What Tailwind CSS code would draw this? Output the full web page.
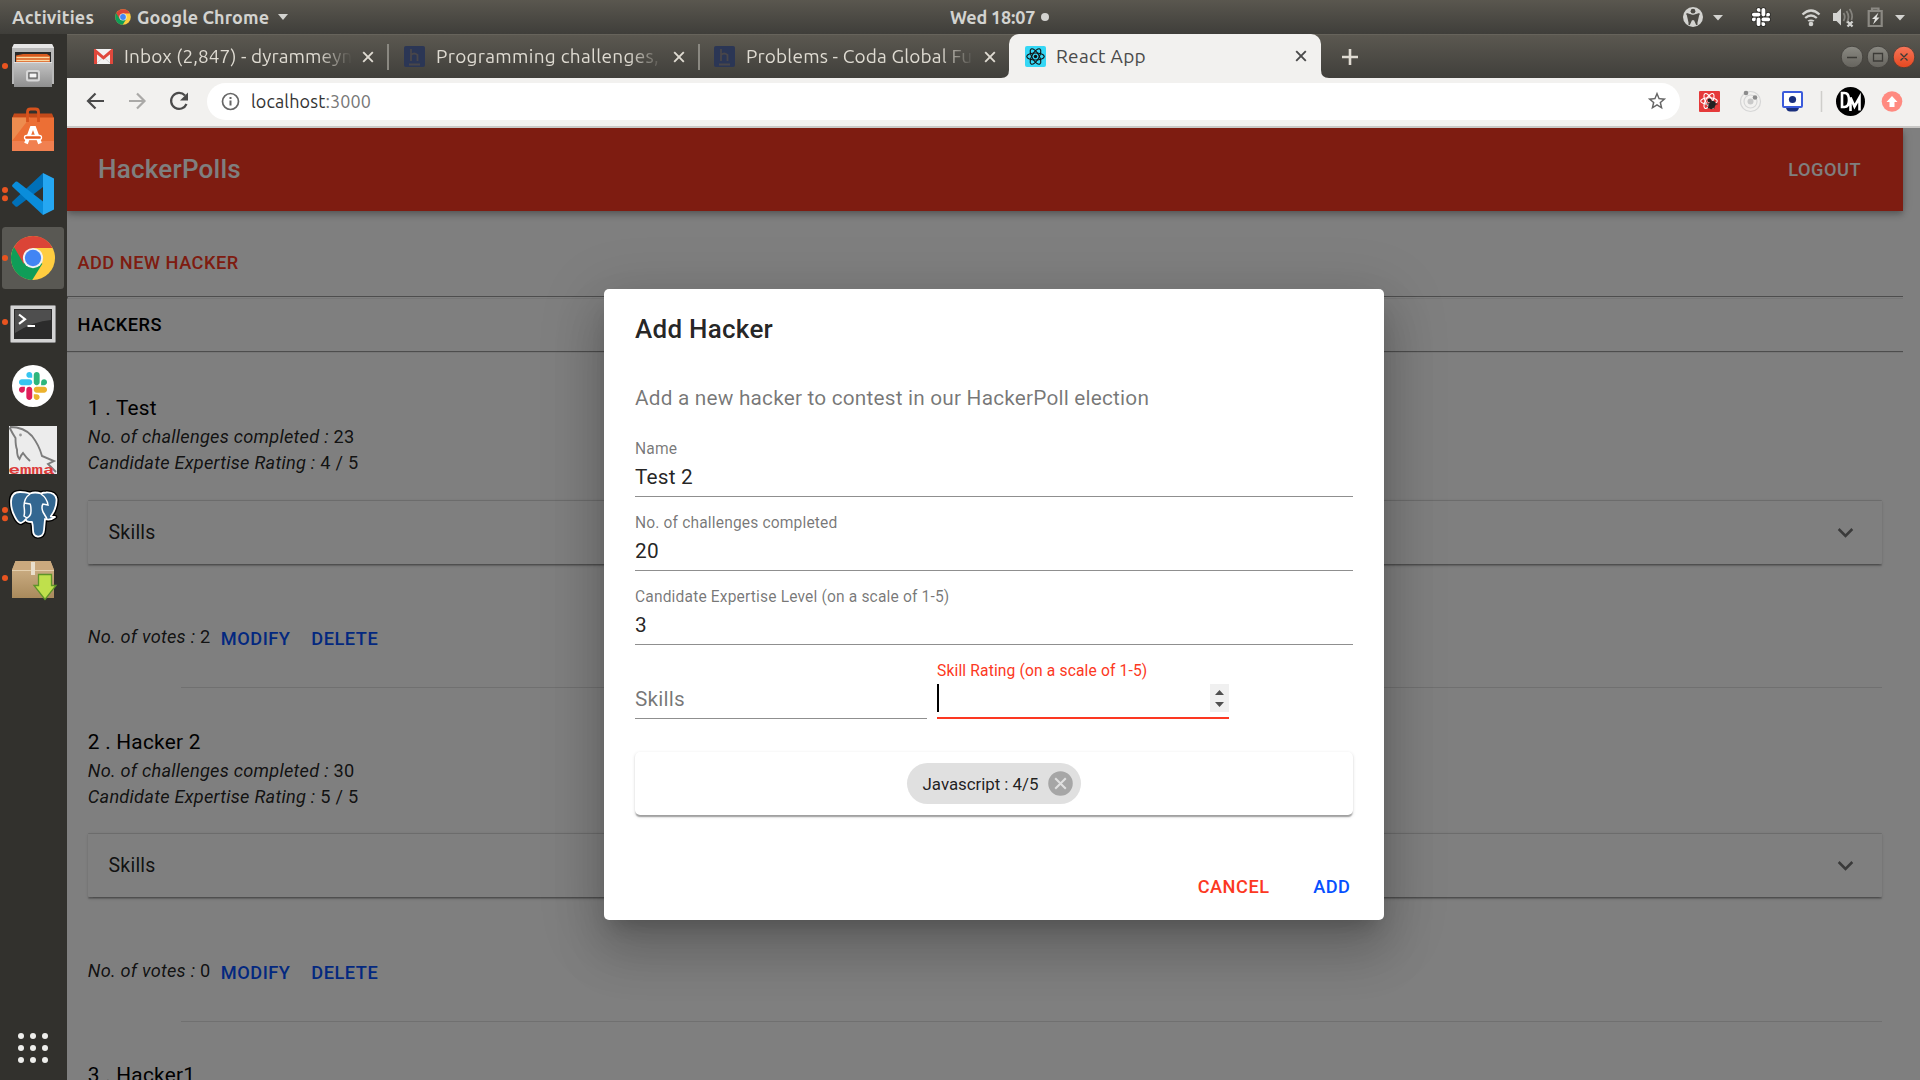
<!DOCTYPE html>
<html lang="en">
<head>
<meta charset="utf-8">
<title>React App</title>
<script src="https://cdn.jsdelivr.net/npm/@tailwindcss/browser@4"></script>
</head>
<body class="w-[1920px] h-[1080px] overflow-hidden flex flex-col bg-[#32312d] font-[Roboto,sans-serif]">
<svg class="hidden">
  <symbol id="chrome" viewBox="0 0 48 48">
    <circle cx="24" cy="24" r="23.5" fill="#ffcd40"/>
    <path d="M24 24 3.7 12.2A23.5 23.5 0 0 0 23.2 47.5L34 30z" fill="#0f9d58"/>
    <path d="M3.7 12.2A23.500 23.500 0 0 1 44.800 13.200H24L14 30z" fill="#db4437"/>
    <circle cx="24" cy="24" r="10.800" fill="#f1f1f1"/><circle cx="24" cy="24" r="8.700" fill="#4285f4"/>
  </symbol>
  <symbol id="slack" viewBox="-6 -6 134.800 134.800">
    <g stroke="var(--o,none)" stroke-width="10" paint-order="stroke">
    <path d="M25.800 77.600c0 7.100-5.800 12.900-12.900 12.900S0 84.700 0 77.600s5.800-12.900 12.900-12.900h12.900v12.900zm6.500 0c0-7.100 5.800-12.900 12.900-12.900s12.900 5.800 12.900 12.900v32.300c0 7.100-5.800 12.900-12.900 12.900s-12.900-5.800-12.900-12.900V77.600z" fill="var(--a,#e01e5a)"/>
    <path d="M45.200 25.800c-7.100 0-12.900-5.800-12.900-12.900S38.100 0 45.200 0s12.900 5.800 12.900 12.900v12.900H45.200zm0 6.500c7.100 0 12.900 5.800 12.900 12.900s-5.800 12.900-12.900 12.900H12.900C5.800 58.100 0 52.300 0 45.200s5.800-12.900 12.900-12.900h32.300z" fill="var(--a,#36c5f0)"/>
    <path d="M97 45.200c0-7.100 5.800-12.900 12.900-12.900s12.900 5.800 12.900 12.900-5.800 12.900-12.900 12.900H97V45.200zm-6.500 0c0 7.100-5.800 12.900-12.900 12.900s-12.900-5.800-12.900-12.900V12.900C64.700 5.800 70.500 0 77.600 0s12.900 5.800 12.900 12.900v32.300z" fill="var(--a,#2eb67d)"/>
    <path d="M77.600 97c7.100 0 12.900 5.800 12.900 12.900s-5.800 12.900-12.900 12.900-12.900-5.800-12.900-12.900V97h12.900zm0-6.500c-7.100 0-12.900-5.800-12.900-12.900s5.800-12.900 12.900-12.900h32.300c7.100 0 12.900 5.800 12.900 12.900s-5.800 12.900-12.900 12.900H77.600z" fill="var(--a,#ecb22e)"/>
    </g>
  </symbol>
  <symbol id="x" viewBox="0 0 12 12"><path d="M1.200 1.200l9.600 9.600M10.800 1.200l-9.600 9.600" stroke="currentColor" stroke-width="1.900"/></symbol>
  <symbol id="atom" viewBox="-12 -12 24 24"><g fill="none" stroke="currentColor" stroke-width="1.300"><ellipse rx="10" ry="4"/><ellipse rx="10" ry="4" transform="rotate(60)"/><ellipse rx="10" ry="4" transform="rotate(120)"/></g><circle r="2" fill="currentColor"/></symbol>
</svg>

<!-- GNOME top bar -->
<header class="h-[34px] shrink-0 grid grid-cols-[1fr_auto_1fr] items-center bg-linear-to-b from-[#5a574f] to-[#3f3e3a] text-[#d3d3d0] font-['Ubuntu','Noto_Sans',sans-serif] font-semibold text-[18px]">
  <div class="flex items-center h-full pl-3">
    <span class="w-[103px] tracking-[0.200px]">Activities</span>
    <svg class="size-4 mr-[6px]"><use href="#chrome"/></svg>
    <span class="w-[141px] whitespace-nowrap tracking-[0.100px]">Google Chrome</span>
    <svg class="w-[10px] h-[6px]" viewBox="0 0 10 6"><path d="M0 0h10L5 6z" fill="#d3d3d0"/></svg>
  </div>
  <div class="flex items-center ml-20 w-[100px]"><span class="w-[91px] whitespace-nowrap tracking-[-0.200px]">Wed 18:07</span><i class="size-2 rounded-full bg-[#d3d3d0] shrink-0"></i></div>
  <div class="flex justify-end">
    <svg class="w-[250px] h-[34px]" viewBox="1670 0 250 34">
      <circle cx="1693" cy="17" r="10" fill="#d3d3d0"/><circle cx="1693" cy="11.200" r="2.400" fill="#4b4944"/><path d="M1686.500 13.800l5 1.500v4l-2.500 5.500M1699.500 13.800l-5 1.500v4l2.500 5.500M1691.500 15.500h3v4h-3z" fill="#4b4944" stroke="#4b4944" stroke-width="1.600"/>
      <path d="M1713 15h10l-5 5.500zM1895 15h10l-5 5.500z" fill="#d3d3d0"/>
      <g style="--a:#fff;--o:#2b2a27"><use href="#slack" x="1751" y="7" width="20" height="20"/></g>
      <g fill="none" stroke="#d3d3d0" stroke-width="2.300"><path d="M1802.500 14.500q8.500-8 17 0M1805.200 18q5.800-5 11.600 0"/></g><path d="M1807.500 20.500q3.500-2 7 0l-1 1h-5z" fill="#d3d3d0"/><circle cx="1811" cy="24" r="2.300" fill="#d3d3d0"/>
      <path d="M1833 13h3.500l4.500-4.500v17l-4.500-4.500h-3.500z" fill="#d3d3d0"/><g fill="none" stroke="#85837d" stroke-width="1.800"><path d="M1843.500 13q2.500 4 0 8M1846.500 11q4 6 0 12M1849.500 9q4 5.500 2 11"/></g><path d="M1847.500 21.500l5 5m0-5l-5 5" stroke="#d3d3d0" stroke-width="2.300"/>
      <path d="M1868.700 11h13v15h-13zM1872 10.500v-2h6.500v2" fill="none" stroke="#8b8983" stroke-width="2.200"/><path d="M1878.500 12.500l-6.500 6.500h3l-2 5.500 6.500-7h-3z" fill="#e3e3e0"/>
    </svg>
  </div>
</header>

<div class="flex h-[1046px]">
  <!-- Dock -->
  <nav class="w-[67px] shrink-0 flex flex-col bg-[#32312d]">
    <svg class="w-[67px] h-16" viewBox="0 0 67 64">
      <defs><linearGradient id="gm" x2="0" y2="1"><stop stop-color="#c4c4c4"/><stop offset="1" stop-color="#8f8f8f"/></linearGradient></defs>
      <circle cx="5" cy="32" r="3" fill="#e95420"/>
      <path d="M14 10h38l2 4v36H12V14z" fill="#b9b9b9"/><path d="M14 10h38l2 4H12z" fill="#e6e6e6"/><rect x="15" y="18" width="36" height="11" fill="#282828"/><path d="M16 28v-6.500l7-1.500h24l3 2v6z" fill="#d85a1e"/><path d="M16.500 23.500h33M16.500 26.500h33" stroke="#fbd8a0" stroke-width="1.300"/>
      <rect x="14" y="28" width="38" height="25" fill="url(#gm)"/><path d="M14 28.500h38" stroke="#e0e0e0"/><rect x="27" y="37" width="12" height="9.500" rx="1.500" fill="none" stroke="#d8d8d8" stroke-width="2"/><rect x="29" y="39" width="8" height="5" fill="#f5f5f5" stroke="#555"/>
    </svg>
    <svg class="w-[67px] h-16" viewBox="0 0 67 64">
      <path d="M14 15.500h38l2 5H12z" fill="#c34a1a"/><path d="M12 19.500h42V53H12z" fill="#ec6f35"/><path d="M12 43h42v10H12z" fill="#f18050"/><path d="M12 19.500h18L12 43z" fill="#efa060" opacity=".6"/>
      <path d="M27.500 24V14q0-3 3-3h5q3 0 3 3v10" fill="none" stroke="#d6521d" stroke-width="2.800"/>
      <path d="M26 45.500L31.700 30h2.600L40 45.500" fill="none" stroke="#fff" stroke-width="3.800"/><rect x="24.500" y="37.500" width="17" height="4" rx="2" fill="#e85a1f" stroke="#fff" stroke-width="1.300"/>
    </svg>
    <svg class="w-[67px] h-16" viewBox="0 0 67 64">
      <circle cx="5" cy="28" r="3" fill="#e95420"/><circle cx="5" cy="36.300" r="3" fill="#e95420"/>
      <path d="M43 11L12.500 39.500q-1 1 0 2l3 3q1 .7 2 0L43 25z" fill="#0070b8"/><path d="M43 53L12.500 24.800q-1-1 0-2l3-3q1-.7 2 0L43 39.500z" fill="#0a8ddb"/><path d="M43 11l11 5.500v31L43 53z" fill="#25a7f2"/>
    </svg>
    <svg class="w-[67px] h-16" viewBox="0 0 67 64">
      <rect x="2" y="1" width="62" height="62" rx="3.500" fill="#595853"/><circle cx="5" cy="32" r="3" fill="#e95420"/><use href="#chrome" x="10.500" y="9.500" width="45" height="45"/>
    </svg>
    <svg class="w-[67px] h-16" viewBox="0 0 67 64">
      <circle cx="5" cy="32" r="3" fill="#e95420"/>
      <rect x="10.500" y="15.500" width="45" height="37" rx="1" fill="#d4d4d4" stroke="#8c8c8c"/><rect x="14" y="19" width="38" height="30" fill="#2b2b2b"/><path d="M15 20h36v10Q34 31 15 43z" fill="#4e4e4e"/><path d="M19 24.500l6 4.700-6 4.700M27.500 36h7.500" stroke="#fff" stroke-width="2.200" fill="none"/>
    </svg>
    <svg class="w-[67px] h-16" viewBox="0 0 67 64"><circle cx="33" cy="32" r="21" fill="#fff"/><use href="#slack" x="17.600" y="16.600" width="30.800" height="30.800"/></svg>
    <svg class="w-[67px] h-16" viewBox="0 0 67 64">
      <rect x="9" y="8" width="48" height="48" fill="#ececec"/>
      <path d="M9.500 9.500q3 6 6 10.500 0 8 1.500 11.500 0 7 2.500 9.500 1.500-4 3.500-6 3.500 5 7 8M10 9q14 0 22 9 7 9 10 20l12 5-6 3 8 8" fill="none" stroke="#7c7c7c" stroke-width="1.900"/><circle cx="20.500" cy="17" r="1.400" fill="#999"/>
      <text x="8.500" y="55.500" textLength="46" lengthAdjust="spacingAndGlyphs" class="font-['Liberation_Mono',monospace] font-bold text-[13px]" fill="#dc3a3a">emma</text>
    </svg>
    <svg class="w-[67px] h-16" viewBox="0 0 67 64">
      <circle cx="5" cy="28" r="3" fill="#e95420"/><circle cx="5" cy="36.300" r="3" fill="#e95420"/>
      <g stroke-linejoin="round" fill="#336791"><path d="M20 10q-9 0-9 10 0 8 4 15 3 6 6 6 3-1 5-4-1 3 6 3 1 3 1 8 0 6 4.500 6.500 6 .5 6.500-6.500l1-11q5 2 10-2-5 0-4-1 6-8 5.500-17Q55 10 46 10.500q-3 0-5 1-6-2-11 0-5-1.500-10-1.500z" stroke="#000" stroke-width="4.500"/><path d="M20 10q-9 0-9 10 0 8 4 15 3 6 6 6 3-1 5-4-1 3 6 3 1 3 1 8 0 6 4.500 6.500 6 .5 6.500-6.500l1-11q5 2 10-2-5 0-4-1 6-8 5.500-17Q55 10 46 10.500q-3 0-5 1-6-2-11 0-5-1.500-10-1.500z" stroke="#fff" stroke-width="1.800"/></g>
      <path d="M30 12q-6 4-6 12 1 7 0 10l3 2q4-2 4-7 0-6-1-7l-6-1M41 12q6 4 7 11l-5-1q-2 3 0 8 3 5 4 7" fill="none" stroke="#fff" stroke-width="1.500"/>
    </svg>
    <svg class="w-[67px] h-16" viewBox="0 0 67 64">
      <defs><linearGradient id="bx" x2="0" y2="1"><stop stop-color="#d3b58c"/><stop offset="1" stop-color="#a98a5c"/></linearGradient></defs>
      <circle cx="5" cy="32" r="3" fill="#e95420"/>
      <path d="M15.500 15h35L54 24v28H12V24z" fill="url(#bx)"/><path d="M15.500 15h35L54 24H12z" fill="#cba97e"/><path d="M12 24.500h42" stroke="#e4cfae"/><path d="M31 16h4v13h-4z" fill="#eadfcd"/>
      <path d="M38.500 28.500h13v11H56l-11 14-11-14h4.500z" fill="#bfe04c" stroke="#5d9429" stroke-width="1.300"/>
    </svg>
    <svg class="w-[67px] h-[60px] mt-auto mb-[2px]" viewBox="0 0 67 60" fill="#eeeeec">
      <circle cx="21" cy="18" r="3"/><circle cx="33" cy="18" r="3"/><circle cx="45" cy="18" r="3"/><circle cx="21" cy="30" r="3"/><circle cx="33" cy="30" r="3"/><circle cx="45" cy="30" r="3"/><circle cx="21" cy="42" r="3"/><circle cx="33" cy="42" r="3"/><circle cx="45" cy="42" r="3"/>
    </svg>
  </nav>

  <div class="flex flex-col w-[1853px]">
    <!-- Browser tabs -->
    <div class="h-11 shrink-0 flex items-center bg-linear-to-b from-[#5b5850] to-[#403f3b] border-t border-[#66635b] font-['Ubuntu','Noto_Sans',sans-serif] text-[19px] text-[#dfdbd2]">
      <div class="w-[322px] h-full flex items-center pl-[27px]">
        <svg class="w-[19px] h-[15px] mr-[11px]" viewBox="0 0 19 15"><rect width="19" height="15" rx="1.500" fill="#f2f2f2"/><path d="M3 14l6.500-6L16 14" fill="none" stroke="#d5d5d5"/><path d="M1.500 15V2l8 6.800L17.500 2v13" fill="none" stroke="#e0483c" stroke-width="3"/></svg>
        <span class="w-[228px] overflow-hidden whitespace-nowrap tracking-[0.100px] mask-r-from-85% mask-r-to-100%">Inbox (2,847) - dyrammeyn</span>
        <svg class="size-3 ml-[10px] mr-[13px]"><use href="#x"/></svg>
        <i class="w-[2px] h-[26px] bg-[#8a8881]"></i>
      </div>
      <div class="w-[311px] h-full flex items-center pl-[15px]">
        <svg class="size-[21px] mr-[11px]" viewBox="0 0 21 21"><rect width="21" height="21" rx="2" fill="#2b3655"/><path d="M7 3v12M7 9q3-3 6.500 0v6M5 18.500h11" fill="none" stroke="#49464a" stroke-width="1.800"/></svg>
        <span class="w-[227px] overflow-hidden whitespace-nowrap tracking-[0.300px] mask-r-from-85% mask-r-to-100%">Programming challenges,</span>
        <svg class="size-3 ml-[10px] mr-[13px]"><use href="#x"/></svg>
        <i class="w-[2px] h-[26px] bg-[#8a8881]"></i>
      </div>
      <div class="w-[309px] h-full flex items-center pl-[14px]">
        <svg class="size-[21px] mr-[11px]" viewBox="0 0 21 21"><rect width="21" height="21" rx="2" fill="#2b3655"/><path d="M7 3v12M7 9q3-3 6.500 0v6M5 18.500h11" fill="none" stroke="#49464a" stroke-width="1.800"/></svg>
        <span class="w-[228px] overflow-hidden whitespace-nowrap tracking-[0.150px] mask-r-from-85% mask-r-to-100%">Problems - Coda Global Fu</span>
        <svg class="size-3 ml-[10px]"><use href="#x"/></svg>
      </div>
      <div class="relative w-[312px] h-11 -mt-px flex items-center pl-4 rounded-t-[10px] bg-[#f2f1ef] text-[#4a4a4a]">
        <svg class="absolute -left-2 bottom-0 size-2" viewBox="0 0 8 8"><path d="M8 0v8H0q8 0 8-8" fill="#f2f1ef"/></svg>
        <svg class="absolute -right-2 bottom-0 size-2" viewBox="0 0 8 8"><path d="M0 0v8h8q-8 0-8-8" fill="#f2f1ef"/></svg>
        <svg class="size-[21px] mr-[10px] rounded-[2px] bg-[#35d7f5] text-[#111]"><use href="#atom"/></svg>
        <span class="w-[239px] tracking-[0.300px]">React App</span>
        <svg class="size-3"><use href="#x"/></svg>
      </div>
      <svg class="size-4 ml-[21px]" viewBox="0 0 16 16"><path d="M8 0v16M0 8h16" stroke="#dfdbd2" stroke-width="2.600"/></svg>
      <svg class="w-[80px] h-6 ml-auto" viewBox="0 0 80 24">
        <defs><linearGradient id="wb" x2="0" y2="1"><stop stop-color="#8b8a83"/><stop offset="1" stop-color="#65635d"/></linearGradient><linearGradient id="wc" x2="0" y2="1"><stop stop-color="#f8765a"/><stop offset="1" stop-color="#e6471e"/></linearGradient></defs>
        <g stroke="#3d3b37" stroke-width=".8"><circle cx="12" cy="12" r="10.800" fill="url(#wb)"/><circle cx="38" cy="12" r="10.800" fill="url(#wb)"/><circle cx="64" cy="12" r="10.800" fill="url(#wc)"/></g>
        <g fill="none" stroke="#3c3b37" stroke-width="1.300"><path d="M7 12.500h10M33.500 8.500h9v7.500h-9zM60.500 8.500l7 7m0-7l-7 7"/></g>
      </svg>
    </div>
    <!-- Toolbar -->
    <div class="h-[50px] shrink-0 flex items-center bg-[#f2f1ef] border-b-2 border-[#c9c8c6] pb-0.5 font-['Ubuntu','Noto_Sans',sans-serif] text-[18px]">
      <svg class="w-[140px] h-8" viewBox="67 85 140 32" fill="none" stroke-width="2.200">
        <path d="M104 101H88.500M95.500 93.500L88 101l7.500 7.500" stroke="#4a4a4a"/><path d="M129 101h15.500M137 93.500l7.500 7.500-7.500 7.500" stroke="#aaa9a7"/><path d="M186.500 104a8 8 0 1 1-1.500-8.500" stroke="#4a4a4a"/><path d="M188 92.500v8h-8z" fill="#4a4a4a"/>
      </svg>
      <div class="flex items-center w-[1473px] h-[37px] rounded-full bg-white pl-[14px] pr-[12.500px]">
        <svg class="size-[19px] mr-[11px]" viewBox="0 0 19 19"><circle cx="9.500" cy="9.500" r="8" fill="none" stroke="#666" stroke-width="1.700"/><path d="M9.500 8.500v5M9.500 5v2" stroke="#666" stroke-width="2"/></svg>
        <span class="text-[#333] tracking-[0.130px]">localhost<span class="text-[#777]">:3000</span></span>
        <svg class="size-[22px] ml-auto" viewBox="0 0 24 24"><path d="M22 9.240l-7.190-.62L12 2 9.190 8.630 2 9.240l5.460 4.730L5.820 21 12 17.270 18.180 21l-1.630-7.030L22 9.240zM12 15.400l-3.760 2.270 1-4.280-3.320-2.880 4.380-.38L12 6.100l1.710 4.040 4.380.38-3.320 2.880 1 4.280L12 15.400z" fill="#666"/></svg>
      </div>
      <svg class="w-[240px] h-[36px]" viewBox="1680 83 240 36">
        <rect x="1699" y="91" width="21" height="21" rx="1" fill="#e53a3a"/><svg x="1699" y="91" width="20" height="20" class="text-white"><use href="#atom"/></svg><ellipse cx="1712" cy="105" rx="3.200" ry="4.300" fill="#222" transform="rotate(35 1712 105)"/><circle cx="1709.500" cy="100.500" r="2" fill="#222"/><path d="M1706.500 104h11M1708 108l7-6M1714 108.500v-6" stroke="#222" stroke-width="1.200"/>
        <g fill="none" stroke="#d6d6d6" stroke-width="1.200"><circle cx="1750.500" cy="101.500" r="10"/><circle cx="1750.500" cy="101.500" r="6.500"/></g><circle cx="1750.500" cy="101.500" r="3" fill="#c9c9c9"/><circle cx="1746" cy="93" r="2.300" fill="#8c8c8c"/><circle cx="1755" cy="97.500" r="2.300" fill="#8c8c8c"/>
        <rect x="1783" y="92" width="19" height="15" rx="1" fill="#fff" stroke="#3b5bdb" stroke-width="2"/><circle cx="1792.500" cy="99.500" r="3.600" fill="#1a2f7d"/><path d="M1786 108h13q-1 3.500-4 3.500h-5q-3 0-4-3.500z" fill="#1a2f7d"/>
        <path d="M1821.500 91v21" stroke="#cfcecb" stroke-width="1.500"/>
        <circle cx="1850.500" cy="101.500" r="14.500" fill="#000"/><path d="M1842 93v14h2.500q4.500 0 4.500-7t-4.500-7zM1850.500 111V97.500l4 9 5-9v13" fill="none" stroke="#fff" stroke-width="2.600"/>
        <circle cx="1892" cy="101.500" r="10.300" fill="#ff8a80"/><path d="M1892 96l5.500 6h-3v5h-5v-5h-3z" fill="#fff"/>
      </svg>
    </div>

    <!-- Page -->
    <div class="relative h-[952px] overflow-hidden bg-white">
      <div class="w-[1836px]">
        <div class="flex h-[83px] items-center justify-between bg-[#fc3822] pl-[31px] pr-[42px] text-white font-medium shadow-[0_2.6px_5.200px_-1.300px_rgba(0,0,0,.2),0_5.200px_6.500px_0_rgba(0,0,0,.14),0_1.300px_13px_0_rgba(0,0,0,.12)]">
          <span class="text-[26px] tracking-[0.240px]">HackerPolls</span>
          <span class="text-[18.200px] tracking-[0.52px]">LOGOUT</span>
        </div>
        <div class="h-[85px] pl-[10.400px] pt-[29px] leading-[46px] text-[18.200px] font-medium tracking-[0.52px] text-[#fc3822]">ADD NEW HACKER</div>
        <div class="h-[3px] border-t border-b border-t-[#9a9a9a] border-b-[#eee] border-l border-l-[#9a9a9a]"></div>
        <div class="h-[52px] pl-[10.400px] leading-[52px] text-[18.200px] font-medium tracking-[0.52px] text-black">HACKERS</div>
        <div class="h-[2px] border-t border-t-[#9a9a9a] border-b border-b-[#eee]"></div>

        <div class="flex flex-col px-[20.800px] pt-[39.900px] text-black/87 text-[18.200px] tracking-[0.250px]">
          <section class="h-[333.800px]">
            <h3 class="text-[20.800px] leading-[31.200px] text-black">1 . Test</h3>
            <p class="leading-[26px]"><em>No. of challenges completed : </em>23</p>
            <p class="leading-[26px]"><em>Candidate Expertise Rating : </em>4 / 5</p>
            <div class="mt-[23.600px] h-[64px] flex items-center justify-between pl-[20.800px] pr-[21.500px] border-t border-black/15 rounded-[1px] text-[19.500px] tracking-[0.195px] shadow-[0_2.6px_1.300px_-1.300px_rgba(0,0,0,.2),0_1.300px_1.300px_0_rgba(0,0,0,.14),0_1.300px_3.900px_0_rgba(0,0,0,.12)]">
              <span>Skills</span>
              <svg class="size-[31px]" viewBox="0 0 24 24"><path d="M16.590 8.590L12 13.170 7.410 8.590 6 10l6 6 6-6z" fill="#000" fill-opacity=".54"/></svg>
            </div>
            <div class="mt-[48.800px] flex items-start h-[50px] leading-[50px]"><span class="w-[133px]"><em>No. of votes : </em>2</span><b class="w-[90.500px] pt-[1.500px] font-medium tracking-[0.52px] text-[#0650ff]">MODIFY</b><b class="pt-[1.500px] font-medium tracking-[0.52px] text-[#0650ff]">DELETE</b></div>
            <div class="mt-[25px] ml-[93.500px] h-px bg-black/12"></div>
          </section>
          <section class="h-[333.800px]">
            <h3 class="text-[20.800px] leading-[31.200px] text-black">2 . Hacker 2</h3>
            <p class="leading-[26px]"><em>No. of challenges completed : </em>30</p>
            <p class="leading-[26px]"><em>Candidate Expertise Rating : </em>5 / 5</p>
            <div class="mt-[23.600px] h-[64px] flex items-center justify-between pl-[20.800px] pr-[21.500px] border-t border-black/15 rounded-[1px] text-[19.500px] tracking-[0.195px] shadow-[0_2.6px_1.300px_-1.300px_rgba(0,0,0,.2),0_1.300px_1.300px_0_rgba(0,0,0,.14),0_1.300px_3.900px_0_rgba(0,0,0,.12)]">
              <span>Skills</span>
              <svg class="size-[31px]" viewBox="0 0 24 24"><path d="M16.590 8.590L12 13.170 7.410 8.590 6 10l6 6 6-6z" fill="#000" fill-opacity=".54"/></svg>
            </div>
            <div class="mt-[48.800px] flex items-start h-[50px] leading-[50px]"><span class="w-[133px]"><em>No. of votes : </em>0</span><b class="w-[90.500px] pt-[1.500px] font-medium tracking-[0.52px] text-[#0650ff]">MODIFY</b><b class="pt-[1.500px] font-medium tracking-[0.52px] text-[#0650ff]">DELETE</b></div>
            <div class="mt-[25px] ml-[93.500px] h-px bg-black/12"></div>
          </section>
          <section><h3 class="text-[20.800px] leading-[31.200px] text-black">3 . Hacker1</h3></section>
        </div>
      </div>

      <!-- Backdrop and dialog -->
      <div class="absolute inset-0 bg-black/50 flex justify-center items-start pt-[161px]">
        <div class="w-[780px] h-[631px] ml-px rounded-[5px] bg-white px-[31px] text-black/87 shadow-[0_14.300px_19.500px_-9.100px_rgba(0,0,0,.2),0_31.200px_49.400px_3.900px_rgba(0,0,0,.14),0_11.700px_59.800px_10.400px_rgba(0,0,0,.12)]">
          <h2 class="pt-[20px] h-[93px] text-[26px] leading-[41.600px] font-medium tracking-[0.260px]">Add Hacker</h2>
          <p class="h-[54px] pt-px text-[20.800px] leading-[31px] tracking-[0.195px] text-black/54">Add a new hacker to contest in our HackerPoll election</p>
          <div class="h-[61px] border-b border-black/44"><label class="block h-[26px] text-[15.600px] leading-[26px] tracking-[0.146px] text-black/54">Name</label><div class="text-[20.800px] leading-[30px] tracking-[0.195px]">Test 2</div></div>
          <div class="mt-[13px] h-[61px] border-b border-black/44"><label class="block h-[26px] text-[15.600px] leading-[26px] tracking-[0.146px] text-black/54">No. of challenges completed</label><div class="text-[20.800px] leading-[30px] tracking-[0.195px]">20</div></div>
          <div class="mt-[13px] h-[61px] border-b border-black/44"><label class="block h-[26px] text-[15.600px] leading-[26px] tracking-[0.146px] text-black/54">Candidate Expertise Level (on a scale of 1-5)</label><div class="text-[20.800px] leading-[30px] tracking-[0.195px]">3</div></div>
          <div class="mt-[13px] flex gap-[10px] h-[61px]">
            <div class="w-[292px] border-b border-black/44 pt-[26px] text-[20.800px] leading-[30px] tracking-[0.195px] text-black/54">Skills</div>
            <div class="w-[292px] border-b-2 border-[#fc3822]"><label class="block h-[26px] text-[15.600px] leading-[26px] tracking-[0.146px] text-[#fc3822]">Skill Rating (on a scale of 1-5)</label>
              <div class="flex justify-between h-7"><i class="w-[2px] bg-black"></i><svg class="w-[19px] h-7 bg-[#f0f0f0]" viewBox="0 0 19 28"><path d="M5 11h9L9.500 6zM5 18h9l-4.500 5z" fill="#505050"/></svg></div>
            </div>
          </div>
          <div class="mt-[33px] h-[63px] flex items-center justify-center rounded-[5px] shadow-[0_2.6px_1.300px_-1.300px_rgba(0,0,0,.2),0_1.300px_1.300px_0_rgba(0,0,0,.14),0_1.300px_3.900px_0_rgba(0,0,0,.12)]">
            <div class="w-[174px] h-[41px] rounded-full bg-[#e0e0e0] flex items-center justify-between pl-[15.600px] pr-[5px] text-[16.900px] whitespace-nowrap"><span class="pt-[2px] tracking-[-0.040px]">Javascript : 4/5</span>
              <svg class="size-[31px]" viewBox="0 0 24 24"><path d="M12 2.500a9.500 9.500 0 1 0 0 19 9.500 9.500 0 0 0 0-19z" fill="#a6a6a6"/><path d="M7.900 7.900l8.200 8.200m0-8.200l-8.200 8.200" stroke="#e0e0e0" stroke-width="1.600"/></svg>
            </div>
          </div>
          <div class="mt-[48px] flex justify-end pr-[2.500px] text-[18.200px] leading-[47px] font-medium tracking-[0.52px]"><span class="w-[115.500px] text-[#fc3822]">CANCEL</span><span class="text-[#0650ff]">ADD</span></div>
        </div>
      </div>
    </div>
  </div>
</div>
</body>
</html>
